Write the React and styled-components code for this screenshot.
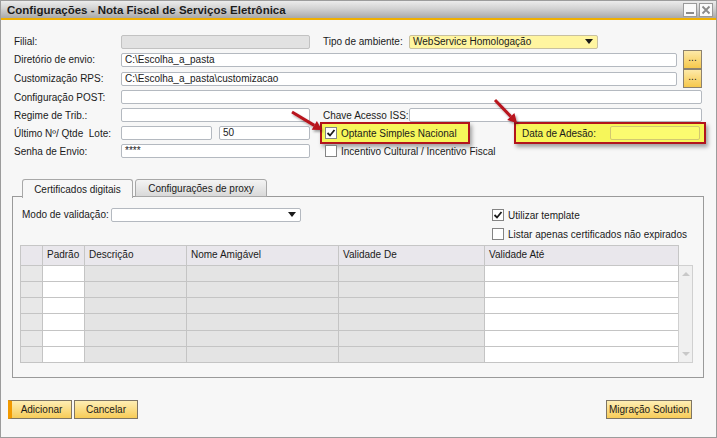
import React from "react";
import styled, { createGlobalStyle } from "styled-components";

const Global = createGlobalStyle`
  html, body { margin: 0; padding: 0; background: #ffffff; }
  body { font-family: "Liberation Sans", Arial, sans-serif; font-size: 10px; color: #1a1a1a; }
  * { box-sizing: border-box; }
`;

const Window = styled.div`
  position: relative;
  width: 717px;
  height: 438px;
  border: 1px solid #9c9c9c;
  background: #f7f7f7;
  display: flex;
  flex-direction: column;
  overflow: hidden;
`;

const TitleBar = styled.div`
  height: 19px;
  display: flex;
  align-items: center;
  justify-content: space-between;
  padding: 0 3px 0 6px;
  background: linear-gradient(#ececec 0%, #d2d2d2 45%, #a9a9a9 100%);
  border-bottom: 2px solid #f0b000;
`;

const Title = styled.div`
  font-weight: bold;
  font-size: 11.5px;
  color: #1c1c1c;
`;

const WinButtons = styled.div`
  display: flex;
  gap: 2px;
`;

const WinButton = styled.div`
  width: 14px;
  height: 14px;
  background: #fafafa;
  border: 1px solid #9a9a9a;
  display: flex;
  align-items: center;
  justify-content: center;
`;

const Form = styled.div`
  display: flex;
  flex-direction: column;
  padding: 13px 0 0 13px;
`;

const Row = styled.div`
  display: flex;
  align-items: center;
  height: ${(p) => p.$h || 18}px;
`;

const Label = styled.div`
  width: ${(p) => p.$w || 107}px;
  flex-shrink: 0;
  margin-left: ${(p) => p.$ml || 0}px;
  white-space: nowrap;
`;

const Input = styled.div`
  width: ${(p) => p.$w}px;
  flex-shrink: 0;
  height: 14px;
  margin-left: ${(p) => p.$ml || 0}px;
  background: ${(p) => p.$bg || "#ffffff"};
  border: 1px solid ${(p) => p.$bd || "#b4b9c0"};
  border-radius: 2px;
  padding: 0 3px;
  line-height: 12px;
  white-space: nowrap;
  overflow: hidden;
`;

const Select = styled(Input)`
  display: flex;
  align-items: center;
  justify-content: space-between;
  padding-right: 4px;
`;

const Arrow = styled.span`
  width: 0;
  height: 0;
  border-left: 4px solid transparent;
  border-right: 4px solid transparent;
  border-top: 5px solid #1a1a1a;
`;

const DotButton = styled.div`
  width: 19px;
  height: 19px;
  margin-left: 6px;
  background: linear-gradient(#fde9a8, #f6c84c);
  border: 1px solid #8c8270;
  display: flex;
  align-items: center;
  justify-content: center;
  font-size: 10px;
  line-height: 8px;
  padding-bottom: 4px;
`;

const Check = styled.div`
  width: 12px;
  height: 12px;
  background: #ffffff;
  border: 1px solid #848484;
  display: flex;
  align-items: center;
  justify-content: center;
  flex-shrink: 0;
`;

const CheckItem = styled.div`
  display: flex;
  align-items: center;
  gap: 4px;
  margin-left: ${(p) => p.$ml || 0}px;
  white-space: nowrap;
`;

const Highlight = styled.div`
  width: ${(p) => p.$w}px;
  flex-shrink: 0;
  height: 22px;
  margin: -2px 0 -2px ${(p) => p.$ml}px;
  background: #f6f65a;
  border: 2px solid #b2141c;
  box-shadow: 2px 3px 4px rgba(0, 0, 0, 0.35);
  display: flex;
  align-items: center;
  padding-left: ${(p) => p.$pl || 3}px;
`;

const TabsArea = styled.div`
  margin: 19px 0 0 11px;
  width: 692px;
  display: flex;
  flex-direction: column;
`;

const TabStrip = styled.div`
  display: flex;
  padding-left: 10px;
  gap: 2px;
  height: 18px;
  position: relative;
  z-index: 1;
`;

const Tab = styled.div`
  width: ${(p) => p.$w}px;
  height: ${(p) => (p.$active ? 19 : 18)}px;
  display: flex;
  align-items: center;
  justify-content: center;
  border: 1px solid #a8a8a8;
  border-bottom: ${(p) => (p.$active ? "none" : "1px solid #a8a8a8")};
  border-radius: 3px 3px 0 0;
  background: ${(p) => (p.$active ? "#f7f7f7" : "linear-gradient(#f4f4f4, #d9d9d9)")};
`;

const Panel = styled.div`
  height: 182px;
  margin-top: -1px;
  border: 1px solid #9a9a9a;
  padding: 10px 7px 0 7px;
  display: flex;
  flex-direction: column;
`;

const PanelTop = styled.div`
  display: flex;
  height: 38px;
`;

const ModoRow = styled.div`
  display: flex;
  align-items: center;
  height: 15px;
  padding-left: 2px;
`;

const Options = styled.div`
  margin-left: 191px;
  margin-top: 2px;
  display: flex;
  flex-direction: column;
  gap: 7px;
`;

const Grid = styled.table`
  border-collapse: collapse;
  table-layout: fixed;
  width: 672px;
`;

const Th = styled.th`
  width: ${(p) => p.$w}px;
  height: 20px;
  padding: 0 0 2px 4px;
  text-align: left;
  font-weight: normal;
  background: ${(p) => (p.$blank ? "#f7f7f7" : "#e9e7ec")};
  border: ${(p) => (p.$blank ? "none" : "1px solid #c6c6c6")};
`;

const Td = styled.td`
  height: 16px;
  padding: 0;
  background: ${(p) => p.$bg};
  border: 1px solid #c4c4c4;
`;

const Scroll = styled.td`
  width: 14px;
  padding: 0;
  background: #f0f0f0;
  border: 1px solid #d0d0d0;
  vertical-align: top;
`;

const ScrollInner = styled.div`
  height: 96px;
  display: flex;
  flex-direction: column;
  justify-content: space-between;
  align-items: center;
  padding: 5px 0;
`;

const Footer = styled.div`
  display: flex;
  align-items: center;
  padding: 22px 23px 0 7px;
  gap: 2px;
`;

const Button = styled.div`
  width: ${(p) => p.$w}px;
  height: 19px;
  margin-left: ${(p) => p.$ml || 0}px;
  display: flex;
  align-items: center;
  justify-content: center;
  white-space: nowrap;
  background: linear-gradient(#feeeb4, #f7cc58);
  border: 1px solid #7e7564;
  border-left: ${(p) => (p.$primary ? "4px solid #f29a00" : "1px solid #7e7564")};
  color: #1a1a1a;
`;

const Arrows = styled.svg`
  position: absolute;
  left: 0;
  top: 0;
  pointer-events: none;
`;

const Tick = () => (
  <svg width="10" height="10" viewBox="0 0 10 10">
    <path d="M1.5 5 L4 7.5 L8.5 2" fill="none" stroke="#1a1a1a" strokeWidth="1.8" />
  </svg>
);

const RedArrow = ({ x1, y1, x2, y2 }) => {
  const a = Math.atan2(y2 - y1, x2 - x1);
  const l = 9;
  const w = 5;
  const bx = x2 - l * Math.cos(a);
  const by = y2 - l * Math.sin(a);
  const px = -Math.sin(a) * w;
  const py = Math.cos(a) * w;
  return (
    <g filter="url(#sh)">
      <line x1={x1} y1={y1} x2={bx} y2={by} stroke="#b8121b" strokeWidth="3" />
      <polygon points={`${x2},${y2} ${bx + px},${by + py} ${bx - px},${by - py}`} fill="#b8121b" />
    </g>
  );
};

const rows = [0, 1, 2, 3, 4, 5];

export default function App() {
  return (
    <>
      <Global />
      <Window>
        <TitleBar>
          <Title>Configurações - Nota Fiscal de Serviços Eletrônica</Title>
          <WinButtons>
            <WinButton>
              <svg width="10" height="10" viewBox="0 0 10 10">
                <rect x="1" y="7" width="8" height="2" fill="#8a8a8a" />
              </svg>
            </WinButton>
            <WinButton>
              <svg width="10" height="10" viewBox="0 0 10 10">
                <path d="M1.5 1.5 L8.5 8.5 M8.5 1.5 L1.5 8.5" stroke="#8a8a8a" strokeWidth="1.8" />
              </svg>
            </WinButton>
          </WinButtons>
        </TitleBar>

        <Form>
          <Row $h={17}>
            <Label>Filial:</Label>
            <Input $w={189} $bg="#e2e2e2" $bd="#c2c2c2" />
            <Label $ml={13} $w={86}>Tipo de ambiente:</Label>
            <Select $w={189} $bg="#fff5a0" $bd="#c8c0a0">
              WebService Homologação
              <Arrow />
            </Select>
          </Row>
          <Row $h={19}>
            <Label>Diretório de envio:</Label>
            <Input $w={556}>C:\Escolha_a_pasta</Input>
            <DotButton>...</DotButton>
          </Row>
          <Row $h={19}>
            <Label>Customização RPS:</Label>
            <Input $w={556}>C:\Escolha_a_pasta\customizacao</Input>
            <DotButton>...</DotButton>
          </Row>
          <Row>
            <Label>Configuração POST:</Label>
            <Input $w={581} />
          </Row>
          <Row>
            <Label>Regime de Trib.:</Label>
            <Input $w={189} />
            <Label $ml={13} $w={86}>Chave Acesso ISS:</Label>
            <Input $w={293} />
          </Row>
          <Row>
            <Label>Último Nº/ Qtde&nbsp; Lote:</Label>
            <Input $w={91} />
            <Input $w={91} $ml={7}>50</Input>
            <Highlight $w={150} $ml={10}>
              <CheckItem>
                <Check>
                  <Tick />
                </Check>
                Optante Simples Nacional
              </CheckItem>
            </Highlight>
            <Highlight $w={192} $ml={44} $pl={6}>
              <Label $w={88}>Data de Adesão:</Label>
              <Input $w={90} $bg="#fbfb70" $bd="#d2c870" />
            </Highlight>
          </Row>
          <Row>
            <Label>Senha de Envio:</Label>
            <Input $w={189}>****</Input>
            <CheckItem $ml={15}>
              <Check />
              Incentivo Cultural / Incentivo Fiscal
            </CheckItem>
          </Row>
        </Form>

        <TabsArea>
          <TabStrip>
            <Tab $w={111} $active>Certificados digitais</Tab>
            <Tab $w={132}>Configurações de proxy</Tab>
          </TabStrip>
          <Panel>
            <PanelTop>
              <ModoRow>
                <Label $w={89}>Modo de validação:</Label>
                <Select $w={190}>
                  <span />
                  <Arrow />
                </Select>
              </ModoRow>
              <Options>
                <CheckItem>
                  <Check>
                    <Tick />
                  </Check>
                  Utilizar template
                </CheckItem>
                <CheckItem>
                  <Check />
                  Listar apenas certificados não expirados
                </CheckItem>
              </Options>
            </PanelTop>
            <Grid>
              <thead>
                <tr>
                  <Th $w={22} />
                  <Th $w={42}>Padrão</Th>
                  <Th $w={102}>Descrição</Th>
                  <Th $w={152}>Nome Amigável</Th>
                  <Th $w={146}>Validade De</Th>
                  <Th $w={194}>Validade Até</Th>
                  <Th $w={14} $blank />
                </tr>
              </thead>
              <tbody>
                {rows.map((r) => (
                  <tr key={r}>
                    <Td $bg="#e8e8e8" />
                    <Td $bg="#ffffff" />
                    <Td $bg="#e4e4e4" />
                    <Td $bg="#e4e4e4" />
                    <Td $bg="#e4e4e4" />
                    <Td $bg="#ffffff" />
                    {r === 0 && (
                      <Scroll rowSpan={6}>
                        <ScrollInner>
                          <svg width="8" height="5" viewBox="0 0 8 5">
                            <path d="M0 5 L4 1 L8 5 Z" fill="#c8c8c8" />
                          </svg>
                          <svg width="8" height="5" viewBox="0 0 8 5">
                            <path d="M0 0 L4 4 L8 0 Z" fill="#c8c8c8" />
                          </svg>
                        </ScrollInner>
                      </Scroll>
                    )}
                  </tr>
                ))}
              </tbody>
            </Grid>
          </Panel>
        </TabsArea>

        <Footer>
          <Button $w={64} $primary>Adicionar</Button>
          <Button $w={64}>Cancelar</Button>
          <Button $w={86} $ml={466}>Migração Solution</Button>
        </Footer>

        <Arrows width="717" height="438">
          <defs>
            <filter id="sh" x="-50%" y="-50%" width="200%" height="200%">
              <feDropShadow dx="1.5" dy="2" stdDeviation="1" floodColor="#000" floodOpacity="0.35" />
            </filter>
          </defs>
          <RedArrow x1={291} y1={111} x2={321} y2={129} />
          <RedArrow x1={494} y1={99} x2={516} y2={122} />
        </Arrows>
      </Window>
    </>
  );
}
